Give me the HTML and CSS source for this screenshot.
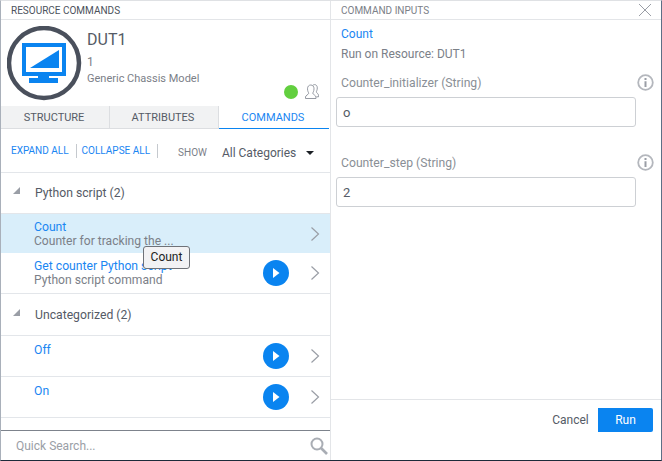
FILE: index.html
```html
<!DOCTYPE html>
<html lang="en">
<head>
<meta charset="utf-8">
<title>Resource Commands</title>
<link rel="stylesheet" href="styles.css">
</head>
<body>
<div class="window">
  <section class="left">
    <header class="panel-title">RESOURCE COMMANDS</header>
    <div class="resource">
      <svg class="logo" width="75" height="75" viewBox="0 0 75 75">
        <circle cx="37" cy="37" r="35" fill="#fff" stroke="#4a505c" stroke-width="4.500"/>
        <path fill="#0a84f0" d="M15 17h44v33H42v2h9v5H22v-5h9v-2H15z"/>
        <path fill="#fff" d="M19 21h36v25H19z"/>
        <path fill="#0a84f0" d="M23 42 52 24v18z"/>
      </svg>
      <div class="resource-text">
        <div class="resource-name">DUT1</div>
        <div class="resource-id">1</div>
        <div class="resource-model">Generic Chassis Model</div>
      </div>
      <div class="resource-status">
        <span class="dot"></span>
        <svg width="14" height="15" viewBox="0 0 14 15" fill="none" stroke="#8a8f98" stroke-width="0.900">
          <path d="M.5 14.500v-1.500c0-1.500 3-2.500 3.200-3.700C3.700 8.500 2.500 7.500 2.500 4.800 2.500 2.500 3.800 1 5.800 1S9 2.500 9 4.800c0 2.700-1.200 3.700-1.200 4.500.2 1.200 3.200 2.200 3.200 3.700v1.500z"/>
          <path d="M8 1.200C8.500.800 9 .6 9.500.6c1.800 0 2.800 1.400 2.800 3.300 0 2.300-1 3.300-1 4.100.2.900 2.200 1.700 2.200 3.300v1.500h-2"/>
        </svg>
      </div>
    </div>
    <nav class="tabs">
      <div class="tab">STRUCTURE</div>
      <div class="tab">ATTRIBUTES</div>
      <div class="tab tab-active">COMMANDS</div>
    </nav>
    <div class="toolbar">
      <a class="link">EXPAND ALL</a>
      <a class="link">COLLAPSE ALL</a>
      <span class="show">SHOW</span>
      <span class="select">All Categories</span>
      <span class="caret"></span>
    </div>
    <div class="list">
      <div class="group"><span class="tri"></span>Python script (2)</div>
      <div class="row row-selected">
        <div class="row-text"><div class="row-name">Count</div><div class="row-desc">Counter for tracking the ...</div></div>
        <svg class="chev" width="10" height="16" viewBox="0 0 10 16" fill="none" stroke="#9a9ea6" stroke-width="1.200"><path d="M1.500 1.500 8.500 8l-7 6.500"/></svg>
      </div>
      <div class="row">
        <div class="row-text"><div class="row-name">Get counter Python script</div><div class="row-desc">Python script command</div></div>
        <span class="play"><svg width="8" height="10" viewBox="0 0 8 10"><path fill="#fff" d="M1 0l6.500 5L1 10z"/></svg></span>
        <svg class="chev" width="10" height="16" viewBox="0 0 10 16" fill="none" stroke="#9a9ea6" stroke-width="1.200"><path d="M1.500 1.500 8.500 8l-7 6.500"/></svg>
      </div>
      <div class="group group-tall"><span class="tri"></span>Uncategorized (2)</div>
      <div class="row">
        <div class="row-text row-text-single"><div class="row-name">Off</div></div>
        <span class="play"><svg width="8" height="10" viewBox="0 0 8 10"><path fill="#fff" d="M1 0l6.500 5L1 10z"/></svg></span>
        <svg class="chev" width="10" height="16" viewBox="0 0 10 16" fill="none" stroke="#9a9ea6" stroke-width="1.200"><path d="M1.500 1.500 8.500 8l-7 6.500"/></svg>
      </div>
      <div class="row">
        <div class="row-text row-text-single"><div class="row-name">On</div></div>
        <span class="play"><svg width="8" height="10" viewBox="0 0 8 10"><path fill="#fff" d="M1 0l6.500 5L1 10z"/></svg></span>
        <svg class="chev" width="10" height="16" viewBox="0 0 10 16" fill="none" stroke="#9a9ea6" stroke-width="1.200"><path d="M1.500 1.500 8.500 8l-7 6.500"/></svg>
      </div>
    </div>
    <div class="search">
      <span class="search-text">Quick Search...</span>
      <svg width="18" height="18" viewBox="0 0 18 18" fill="none" stroke="#a9adb4"><circle cx="7" cy="7" r="5.500" stroke-width="2"/><path d="M11 11l6 6" stroke-width="2.600"/></svg>
    </div>
    <div class="tooltip">Count</div>
  </section>
  <section class="right">
    <header class="panel-title panel-title-right">
      <span>COMMAND INPUTS</span>
      <svg width="14" height="14" viewBox="0 0 14 14" fill="none" stroke="#9a9ea6" stroke-width="1"><path d="M1 1l12 12M13 1 1 13"/></svg>
    </header>
    <div class="inputs">
      <div class="cmd-name">Count</div>
      <div class="cmd-target">Run on Resource: DUT1</div>
      <div class="field">
        <div class="field-label"><span>Counter_initializer (String)</span>
          <svg width="17" height="17" viewBox="0 0 17 17"><circle cx="8.500" cy="8.500" r="7.300" fill="none" stroke="#b4b7bd" stroke-width="1.800"/><path fill="#9a9ea6" d="M7.500 4h2v2h-2zM7.500 7.300h2V13h-2z"/></svg>
        </div>
        <div class="input">o</div>
      </div>
      <div class="field">
        <div class="field-label"><span>Counter_step (String)</span>
          <svg width="17" height="17" viewBox="0 0 17 17"><circle cx="8.500" cy="8.500" r="7.300" fill="none" stroke="#b4b7bd" stroke-width="1.800"/><path fill="#9a9ea6" d="M7.500 4h2v2h-2zM7.500 7.300h2V13h-2z"/></svg>
        </div>
        <div class="input">2</div>
      </div>
    </div>
    <footer class="actions">
      <button class="btn-cancel">Cancel</button>
      <button class="btn-run">Run</button>
    </footer>
  </section>
</div>
</body>
</html>
```

FILE: styles.css
```css
* { box-sizing: border-box; }
html, body { margin: 0; padding: 0; background: #fff; }
body { font-family: Roboto, "Liberation Sans", sans-serif; color: #555b66; }
.window {
  width: 662px;
  height: 461px;
  display: grid;
  grid-template-columns: 330px 1fr;
  border-top: 1px solid #dfe1e4;
  border-left: 1px solid #a9b0ba;
  border-right: 1px solid #5c6f86;
  border-bottom: 1px solid #1d2b3a;
  overflow: hidden;
}
.left {
  position: relative;
  display: flex;
  flex-direction: column;
  border-right: 1px solid #e3e5e8;
  min-height: 0;
}
.right { display: flex; flex-direction: column; min-height: 0; }
.panel-title {
  height: 19px;
  flex: none;
  padding-left: 10px;
  font-size: 10px;
  line-height: 19px;
  color: #4c525c;
  border-bottom: 1px solid #e3e5e8;
}
.panel-title-right {
  display: flex;
  justify-content: space-between;
  align-items: center;
  padding: 0 9px 0 10px;
  color: #7b8088;
}
.resource { height: 86px; flex: none; display: flex; padding: 6px 0 0 6px; }
.logo { flex: none; }
.resource-text { margin-left: 5px; }
.resource-name { font-size: 16px; line-height: 19px; margin-top: 4px; color: #555b66; }
.resource-id { font-size: 12px; line-height: 15px; margin-top: 6px; color: #7b8088; }
.resource-model { font-size: 11px; line-height: 14px; margin-top: 2px; color: #7b8088; }
.resource-status {
  margin-left: auto;
  align-self: flex-end;
  display: flex;
  align-items: center;
  gap: 7px;
  padding: 0 11px 7px 0;
}
.dot { width: 14px; height: 14px; border-radius: 50%; background: #62cf3f; }
.tabs { display: flex; height: 23px; flex: none; margin-right: 1px; }
.tab {
  flex: 1;
  background: #f1f2f3;
  border-right: 1px solid #dcdee1;
  border-bottom: 1px solid #dcdee1;
  font-size: 11px;
  line-height: 23px;
  text-align: center;
  color: #555b66;
  padding-right: 2px;
}
.tab:nth-child(1) { flex: 0 0 109px; }
.tab:nth-child(2) { flex: 0 0 109px; }
.tab-active { background: #fff; color: #1a86f2; border-right: 0; border-bottom: 1px solid #0a84f0; }
.toolbar {
  height: 44px;
  flex: none;
  display: flex;
  align-items: center;
  padding-left: 10px;
  border-bottom: 1px solid #e3e6ea;
}
.link { font-size: 10px; color: #1a86f2; line-height: 14px; padding-right: 7px; border-right: 1px solid #c5c9ce; margin-right: 5px; }
.show { font-size: 10px; color: #7b8088; margin: 4px 0 0 15px; }
.select { font-size: 12px; color: #555b66; margin: 4px 0 0 15px; }
.caret { width: 0; height: 0; margin: 5px 0 0 10px; border: 4px solid transparent; border-top: 4px solid #1c2026; border-bottom: 0; }
.list { flex: 1; min-height: 0; }
.group {
  height: 40px;
  display: flex;
  align-items: center;
  font-size: 12.200px;
  color: #555b66;
  padding-left: 12px;
}
.group-tall { height: 42px; border-bottom: 1px solid #e3e6ea; }
.tri { width: 0; height: 0; margin: -5px 15px 0 0; border-left: 7px solid transparent; border-bottom: 7px solid #9a9ea6; }
.row {
  height: 41px;
  display: flex;
  align-items: center;
  padding: 0 10px 0 33px;
  border-bottom: 1px solid #e3e6ea;
}
.row-selected { background: #d9eefa; height: 40px; border-bottom: 0; border-top: 1px solid #e3e6ea; }
.row-text { flex: 1; align-self: flex-start; padding-top: 6px; min-width: 0; }
.row-text-single { padding-top: 7px; }
.row-name { font-size: 12.200px; line-height: 14px; color: #1a86f2; }
.row-desc { font-size: 12.100px; line-height: 14px; color: #7b8088; }
.play {
  width: 26px;
  height: 26px;
  border-radius: 50%;
  background: #0a84f0;
  display: flex;
  align-items: center;
  justify-content: center;
  margin-right: 21px;
}
.chev { flex: none; }
.search {
  height: 30px;
  flex: none;
  display: flex;
  align-items: center;
  justify-content: space-between;
  padding: 0 2px 0 15px;
  border-top: 1px solid #7d838c;
  font-size: 12px;
  color: #9a9ea6;
}
.tooltip {
  position: absolute;
  left: 142px;
  top: 245px;
  width: 47px;
  height: 23px;
  background: #f2f2f4;
  border: 1px solid #6f7278;
  border-radius: 3px;
  font-size: 12px;
  line-height: 21px;
  text-align: center;
  color: #222;
}
.inputs { flex: 1; padding: 7px 25px 0 5px; }
.cmd-name { font-size: 12px; line-height: 14px; color: #1a86f2; padding-left: 5px; }
.cmd-target { font-size: 12px; line-height: 14px; margin-top: 6px; color: #7b8088; padding-left: 5px; }
.field { margin-bottom: 27px; }
.cmd-target + .field { margin-top: 13px; }
.field-label {
  display: flex;
  justify-content: space-between;
  align-items: center;
  height: 17px;
  font-size: 12.200px;
  color: #8a8f96;
  padding-left: 5px;
  margin-right: -18px;
}
.input {
  height: 30px;
  margin-top: 6px;
  border: 1px solid #cdd0d4;
  border-radius: 3px;
  padding-left: 6px;
  font-size: 13px;
  line-height: 30px;
  color: #555b66;
}
.actions {
  height: 61px;
  flex: none;
  display: flex;
  justify-content: flex-end;
  padding: 8px 8px 0 0;
  border-top: 1px solid #e3e5e8;
}
.actions button {
  height: 24px;
  border: 0;
  font-family: inherit;
  font-size: 12px;
  padding: 0;
}
.btn-cancel { width: 55px; background: #fff; color: #555b66; border-radius: 2px 0 0 2px; }
.btn-run { width: 55px; background: #0a84f0; color: #fff; border-radius: 0 2px 2px 0; }
```
